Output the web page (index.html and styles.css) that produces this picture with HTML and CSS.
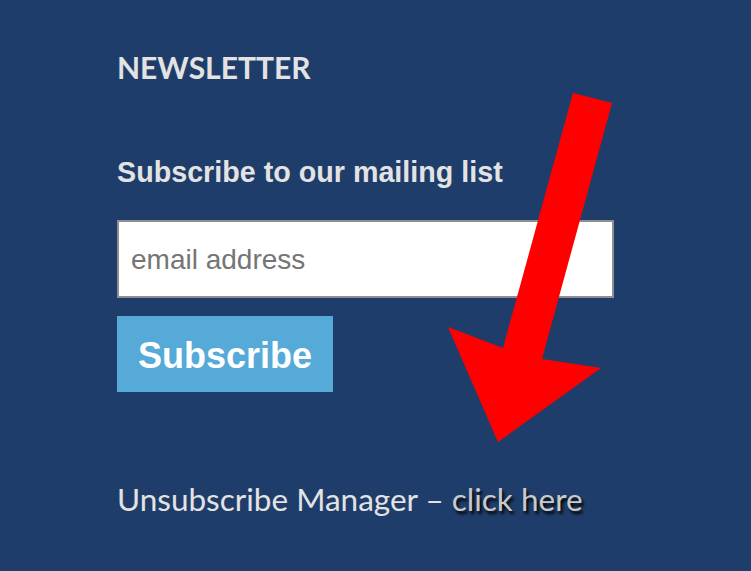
FILE: index.html
```html
<!DOCTYPE html>
<html lang="en">
  <head>
    <meta charset="UTF-8" />
    <meta name="viewport" content="width=device-width, initial-scale=1.0" />
    <title>Newsletter</title>
    <link rel="stylesheet" href="styles.css">
  </head>
  <body>
    <div class="container">
      <h2 class="title">NEWSLETTER</h2>
      <form class="signup" onsubmit="return false">
        <h3>Subscribe to our mailing list</h3>
        <input type="email" placeholder="email address" />
        <button type="submit">Subscribe</button>
      </form>
      <p class="unsub">Unsubscribe Manager &ndash; <a href="#">click here</a></p>
    </div>
    <svg class="arrow" width="751" height="571" viewBox="0 0 751 571">
      <polygon points="573,93 612,103 542,359 601,368 498,442 448,327 503,348" fill="#ff0000" />
    </svg>
  </body>
</html>
```

FILE: styles.css
```css
body {
  margin: 0;
  background-color: #1f3d6a;
  color: #e3e3e3;
  height: 571px;
  overflow: hidden;
  position: relative;
}
.container {
  padding: 52px 0 0 117px;
}
.title {
  font-family: Lato, "Open Sans", sans-serif;
  font-size: 30px;
  line-height: 30px;
  font-weight: 700;
  margin: 0;
}
.signup h3 {
  font-family: "Liberation Sans", Arial, sans-serif;
  font-size: 28.7px;
  line-height: 29px;
  font-weight: 700;
  margin: 76px 0 33px;
}
.signup input {
  display: block;
  box-sizing: border-box;
  width: 497px;
  height: 78px;
  border: 2px solid #8f8f8f;
  padding: 2px 12px 0;
  font-family: "Liberation Sans", Arial, sans-serif;
  font-size: 28px;
  background: #ffffff;
  outline: none;
}
.signup input::placeholder {
  color: #757575;
}
.signup button {
  display: block;
  margin-top: 18px;
  width: 216px;
  height: 76px;
  border: none;
  padding: 3px 0 0;
  background-color: #56aad8;
  color: #ffffff;
  font-family: "Liberation Sans", Arial, sans-serif;
  font-size: 36px;
  font-weight: 700;
  cursor: pointer;
}
.unsub {
  font-family: Lato, "Open Sans", sans-serif;
  font-size: 31.5px;
  line-height: 32px;
  margin: 91px 0 0;
}
.unsub a {
  color: #cacaca;
  text-decoration: none;
  text-shadow: 2px 3px 3px #000000;
}
.arrow {
  position: absolute;
  top: 0;
  left: 0;
}
```
